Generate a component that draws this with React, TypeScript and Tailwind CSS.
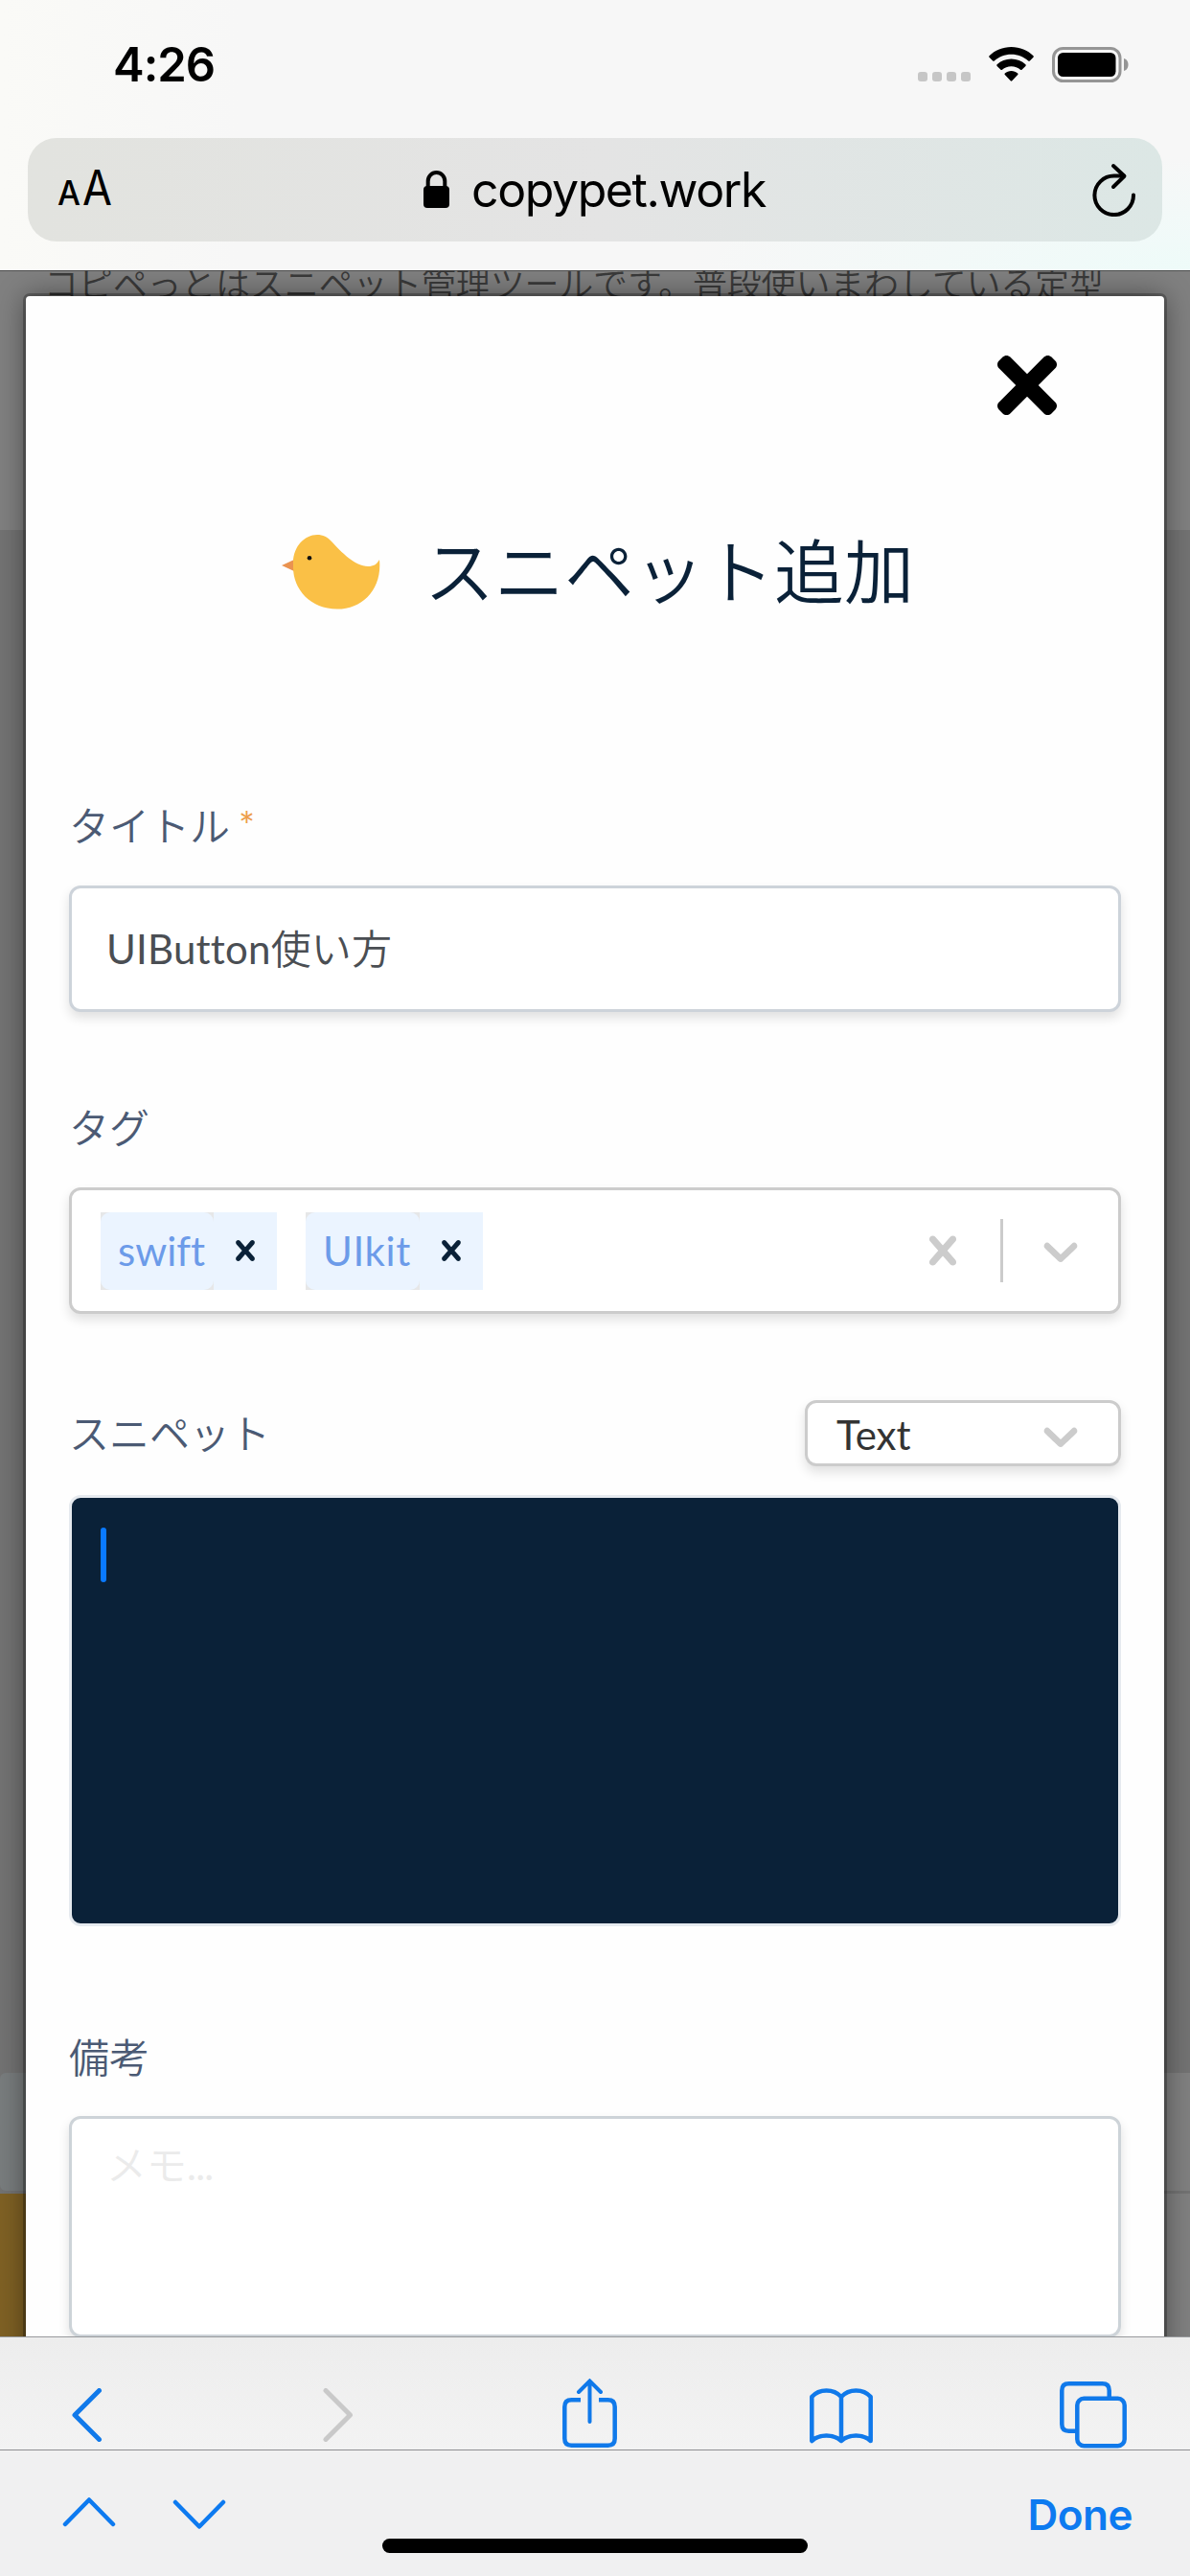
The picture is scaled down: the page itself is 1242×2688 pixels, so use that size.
import React from "react";

const CROSS =
  "M14.348 14.849c-0.469 0.469-1.229 0.469-1.697 0l-2.651-3.030-2.651 3.029c-0.469 0.469-1.229 0.469-1.697 0-0.469-0.469-0.469-1.229 0-1.697l2.758-3.15-2.759-3.152c-0.469-0.469-0.469-1.228 0-1.697s1.228-0.469 1.697 0l2.652 3.031 2.651-3.031c0.469-0.469 1.228-0.469 1.697 0s0.469 1.229 0 1.697l-2.758 3.152 2.758 3.15c0.469 0.469 0.469 1.229 0 1.698z";
const CHEVRON =
  "M4.516 7.548c0.436-0.446 1.043-0.481 1.576 0l3.908 3.747 3.908-3.747c0.533-0.481 1.141-0.446 1.574 0 0.436 0.445 0.408 1.197 0 1.615-0.406 0.418-4.695 4.502-4.695 4.502-0.217 0.223-0.502 0.335-0.787 0.335s-0.57-0.112-0.789-0.335c0 0-4.287-4.084-4.695-4.502s-0.436-1.17 0-1.615z";

const JP = "font-['Lato','Noto_Sans_CJK_JP',sans-serif]";

function Glyph({ d, className }: { d: string; className: string }) {
  return (
    <svg viewBox="0 0 20 20" className={className} fill="currentColor">
      <path d={d} />
    </svg>
  );
}

function StatusBar() {
  return (
    <div className="flex h-[144px] items-start justify-between pt-[38px] pr-[64px] pl-[118px]">
      <span className="font-['Inter',sans-serif] text-[49px] leading-[60px] font-semibold tracking-[-1px] text-black">4:26</span>
      <div className="flex pt-[11px]">
        <div className="mt-[26px] mr-[19px] flex gap-[5px]">
          {[0, 1, 2, 3].map((i) => (
            <i key={i} className="size-[10px] rounded-[3px] bg-[#c6c6c6]" />
          ))}
        </div>
        <svg className="h-[37px] w-[47px]" viewBox="0 0 47 37" fill="black">
          <path d="M23.500 0C32.500 0 40.500 3.500 46.500 9.200Q47.200 10 46.500 10.700L42.800 14.500Q42 15.200 41.200 14.500C36.500 10.200 30.300 7.700 23.500 7.700S10.500 10.200 5.800 14.500Q5 15.200 4.200 14.500L.5 10.700Q-.2 10 .5 9.200C6.500 3.500 14.500 0 23.500 0Z" />
          <path d="M23.500 12.500C29.300 12.500 34.500 14.700 38.400 18.300Q39.200 19.100 38.400 19.900L34.500 23.800Q33.800 24.400 33 23.800C30.500 21.500 27.200 20.200 23.500 20.200S16.500 21.500 14 23.800Q13.200 24.400 12.500 23.800L8.600 19.900Q7.800 19.100 8.600 18.300C12.500 14.700 17.700 12.500 23.500 12.500Z" />
          <path d="M23.500 25C26 25 28.400 25.900 30.200 27.400Q31 28.200 30.200 29L24.300 35.300Q23.500 36 22.700 35.300L16.800 29Q16 28.200 16.800 27.400C18.600 25.900 21 25 23.500 25Z" />
        </svg>
        <svg className="ml-[19px] h-[37px] w-[80px]" viewBox="0 0 80 37">
          <rect x="1.500" y="1.500" width="69.500" height="34" rx="10" fill="none" stroke="#959595" strokeWidth="3" />
          <rect x="6" y="6" width="60.500" height="25" rx="5.500" fill="black" />
          <path d="M75 12C78.500 13 79.500 16 79.500 18.500S78.500 24 75 25Z" fill="#959595" />
        </svg>
      </div>
    </div>
  );
}

function AddressBar() {
  return (
    <div className="mx-[29px] flex h-[108px] items-center justify-between rounded-[30px] bg-linear-to-r from-[#e2e3df] via-[#e4e4e4] to-[#dce7e5] pr-[27px] pl-[31px] font-['Inter',sans-serif] text-black">
      <div className="flex w-[199px] items-baseline">
        <span className="w-[26px] origin-left scale-x-[0.940] text-[36px] leading-[60px] font-medium">A</span>
        <span className="origin-left scale-x-[0.880] text-[51px] leading-[60px]">A</span>
      </div>
      <div className="flex items-center">
        <svg className="h-[40px] w-[27px]" viewBox="0 0 27 40">
          <rect x="0" y="16" width="27" height="23" rx="4" fill="black" />
          <path d="M4.700 18V11a8.800 9 0 0 1 17.600 0V18" fill="none" stroke="black" strokeWidth="4" />
        </svg>
        <span className="ml-[23px] text-[50px] leading-[60px] tracking-[-1.400px]">copypet.work</span>
      </div>
      <div className="flex w-[204px] justify-end">
        <svg className="h-[56px] w-[46px]" viewBox="0 0 46 56" fill="none" stroke="black" strokeWidth="4" strokeLinecap="round" strokeLinejoin="round">
          <path d="M43 33.500A20.300 20.300 0 1 1 23 13.500H33" />
          <path d="M22 3L33.500 13.700L22 25" />
        </svg>
      </div>
    </div>
  );
}

function Backdrop() {
  return (
    <div className="flex h-full flex-col bg-[#737373]">
      <div className="h-[271px] border-t border-[#4d4d4d] bg-[#808080] pl-[46px] font-['Noto_Sans_CJK_JP',sans-serif] text-[36px] leading-[36px] font-[350] tracking-[-0.180px] whitespace-nowrap text-[#3a3a3a]">
        <div className="-mt-[7px]">コピペっとはスニペット管理ツールです。普段使いまわしている定型</div>
      </div>
      <div className="h-[1610px]" />
      <div className="flex h-[123px]">
        <div className="w-[100px] rounded-l-[6px] bg-[#797d7e]" />
        <div className="flex-1 bg-[#808080]" />
      </div>
      <div className="h-[3px] bg-[#737373]" />
      <div className="flex flex-1">
        <div className="w-[100px] bg-[#7f6124]" />
        <div className="flex-1 bg-[#808080]" />
      </div>
    </div>
  );
}

function Label({ children }: { children: React.ReactNode }) {
  return <div className={`${JP} text-[42px] leading-[60px] font-[350] text-[#4b5a74]`}>{children}</div>;
}

function Tag({ name, className }: { name: string; className: string }) {
  return (
    <div className={`flex h-[81px] ${className} bg-[#e6e7e8]`}>
      <div className="flex flex-1 items-center rounded-[10px] bg-[#ebf4ff] pl-[18px] text-[42px] leading-[50px] text-[#6c9be9]">{name}</div>
      <div className="flex w-[66px] items-center justify-center bg-[#ebf4ff] text-[#0a2138]">
        <Glyph d={CROSS} className="size-[42px]" />
      </div>
    </div>
  );
}

const shadow = "shadow-[0_6px_12px_rgba(0,0,0,0.12)]";

function Modal() {
  return (
    <div className={`absolute top-[27px] left-[27px] h-[2200px] w-[1188px] rounded-[4px] bg-[#fefefe] [font-variant-ligatures:none] shadow-[0_0_0_3px_rgba(0,0,0,0.250),0_0_30px_rgba(0,0,0,0.450)] ${JP}`}>
      <div className="flex h-[124px] items-end justify-end pr-[112px]">
        <svg viewBox="0 80 352 352" className="size-[62px]">
          <path d="M242.720 256l100.070-100.070c12.280-12.280 12.280-32.190 0-44.480l-22.240-22.240c-12.280-12.280-32.190-12.280-44.480 0L176 189.280 75.930 89.210c-12.280-12.280-32.190-12.280-44.480 0L9.210 111.450c-12.280 12.280-12.280 32.190 0 44.480L109.280 256 9.210 356.070c-12.280 12.280-12.280 32.190 0 44.480l22.240 22.240c12.280 12.280 32.200 12.280 44.480 0L176 322.720l100.070 100.070c12.280 12.280 32.200 12.280 44.480 0l22.240-22.240c12.280-12.280 12.280-32.190 0-44.480L242.720 256z" />
        </svg>
      </div>
      <div className="mt-[102px] flex h-[120px] items-center pl-[267px]">
        <svg viewBox="0 0 103 78" className="mt-[4px] h-[78px] w-[103px]">
          <path d="M0 32L13 26V38Z" fill="#ea9350" />
          <path d="M12 28C12.500 12 24 0 37 0C43 0 48 2.500 52 7C62 18 77 33 90 33C96 33 99 31 102 26C105 56 85 77.500 58 77.500C30 77.500 12 57 12 34Z" fill="#fac046" />
          <circle cx="29" cy="24.300" r="2.300" fill="#111" />
        </svg>
        <h1 className="-mt-[6px] ml-[46px] font-['Noto_Sans_CJK_JP',sans-serif] text-[73px] leading-[100px] font-[350] whitespace-nowrap text-[#0a2138]">スニペット追加</h1>
      </div>
      <div className="flex flex-col px-[45px] pt-[177px]">
        <div className="flex">
          <Label>タイトル</Label>
          <span className="ml-[9px] text-[40px] leading-[60px] text-[#ed9d4b]">*</span>
        </div>
        <div className={`mt-[32px] flex h-[132px] items-center rounded-[12px] border-[3px] border-[#cdd3da] bg-white pl-[36px] text-[42px] leading-[60px] text-[#4a4e53] ${shadow}`}>
          <span className="tracking-[0.200px]">UIButton<span className="font-[350]">使い方</span></span>
        </div>
        <div className="mt-[91px]">
          <Label>タグ</Label>
        </div>
        <div className={`mt-[32px] flex h-[132px] items-center rounded-[12px] border-[3px] border-[#cccccc] bg-white pl-[30px] text-[#cccccc] ${shadow}`}>
          <Tag name="swift" className="w-[184px]" />
          <div className="w-[30px]" />
          <Tag name="UIkit" className="w-[185px] tracking-[0.600px]" />
          <div className="flex-1" />
          <div className="flex w-[120px] justify-center">
            <Glyph d={CROSS} className="size-[60px]" />
          </div>
          <div className="h-[66px] w-[3px] bg-[#cccccc]" />
          <div className="flex w-[120px] justify-center">
            <Glyph d={CHEVRON} className="size-[60px]" />
          </div>
        </div>
        <div className="mt-[90px] flex h-[69px] items-center justify-between">
          <Label>スニペット</Label>
          <div className={`flex h-[69px] w-[330px] items-center justify-between rounded-[12px] border-[3px] border-[#cccccc] bg-white pr-[30px] pl-[30px] ${shadow}`}>
            <span className="mt-[2px] text-[42px] leading-[50px] text-[#333333]">Text</span>
            <Glyph d={CHEVRON} className="mt-[4px] size-[60px] text-[#cccccc]" />
          </div>
        </div>
        <div className="mt-[30px] h-[450px] rounded-[12px] border-[3px] border-[#e6eaef] bg-[#0a2138] pt-[31px] pl-[30px]">
          <div className="h-[57px] w-[6px] rounded-full bg-[#0a7aff]" />
        </div>
        <div className="mt-[107px]">
          <Label>備考</Label>
        </div>
        <div className={`mt-[31px] h-[231px] rounded-[12px] border-[3px] border-[#cdd3d8] bg-white pt-[18px] pl-[36px] text-[42px] leading-[60px] font-[350] text-[#ebebeb] ${shadow}`}>
          メモ<span className="font-normal tracking-[-0.800px]">...</span>
        </div>
      </div>
    </div>
  );
}

function BottomBars() {
  return (
    <div className="h-[250px] border-t border-[#97999c] bg-[#f0f0f1]">
      <div className="flex h-[118px] items-start border-b-[1px] border-[#8e8e91] bg-linear-to-b from-[#ededed] to-[#f3f3f3] pl-[75px] text-[#1079ea]" >
        <svg className="mt-[53px] h-[56px] w-[32px]" viewBox="0 0 32 56" fill="none" stroke="currentColor" strokeWidth="5" strokeLinecap="round" strokeLinejoin="round">
          <path d="M28.500 2.500L3 28L28.500 53.500" />
        </svg>
        <svg className="mt-[53px] ml-[230px] h-[56px] w-[32px] text-[#c9c9c9]" viewBox="0 0 32 56" fill="none" stroke="currentColor" strokeWidth="5" strokeLinecap="round" strokeLinejoin="round">
          <path d="M3 2.500L28.500 28L3 53.500" />
        </svg>
        <svg className="mt-[43px] ml-[218px] h-[72px] w-[57px]" viewBox="0 0 57 72" fill="none" stroke="currentColor" strokeWidth="4.500">
          <path d="M19 22.300H9.500Q2.300 22.300 2.300 29.500V62.500Q2.300 69.700 9.500 69.700H47.500Q54.700 69.700 54.700 62.500V29.500Q54.700 22.300 47.500 22.300H38" />
          <path d="M28.500 45V3M17 14L28.500 2.500L40 14" strokeLinecap="round" strokeWidth="4" />
        </svg>
        <svg className="mt-[53px] ml-[201px] h-[58px] w-[66px]" viewBox="0 0 66 58" fill="none" stroke="currentColor" strokeWidth="4.500" strokeLinejoin="round" strokeLinecap="round">
          <path d="M2.300 9C10 0.200 25 0.200 33 9C41 0.200 56 0.200 63.700 9V55C56 47.700 41 47.700 33 55C25 47.700 10 47.700 2.300 55ZM33 9V55" />
        </svg>
        <svg className="mt-[46px] ml-[195px] h-[70px] w-[70px]" viewBox="0 0 70 70" fill="none" stroke="currentColor" strokeWidth="4.500">
          <path d="M51.700 16V9.500Q51.700 2.300 44.500 2.300H9.500Q2.300 2.300 2.300 9.500V44.500Q2.300 51.700 9.500 51.700H17" />
          <rect x="18.300" y="17.800" width="49.400" height="49.400" rx="7" />
        </svg>
      </div>
      <div className="flex h-[92px] items-start pl-[65px] text-[#0d7af0]">
        <svg className="mt-[48px] h-[32px] w-[56px]" viewBox="0 0 56 32" fill="none" stroke="currentColor" strokeWidth="4.500" strokeLinecap="round" strokeLinejoin="round">
          <path d="M3 29L28 3.500L53 29" />
        </svg>
        <svg className="mt-[51px] ml-[59px] h-[32px] w-[56px]" viewBox="0 0 56 32" fill="none" stroke="currentColor" strokeWidth="4.500" strokeLinecap="round" strokeLinejoin="round">
          <path d="M3 3L28 28.500L53 3" />
        </svg>
        <span className="mt-[40px] mr-[60px] ml-auto font-['Inter',sans-serif] text-[44px] leading-[54px] font-semibold tracking-[-0.500px]">Done</span>
      </div>
      <div className="mx-auto h-[15px] w-[444px] rounded-full bg-black" />
    </div>
  );
}

export default function App() {
  return (
    <div className="flex h-[2688px] w-[1242px] flex-col overflow-hidden bg-[#f7f7f7]">
      <header className="h-[282px] bg-[radial-gradient(ellipse_at_100%_100%,#eefbf9_0%,rgba(247,247,247,0)_30%),linear-gradient(to_right,#fafaf7,#f7f7f7_20%)]">
        <StatusBar />
        <AddressBar />
      </header>
      <main className="relative h-[2156px] overflow-hidden">
        <Backdrop />
        <Modal />
      </main>
      <BottomBars />
    </div>
  );
}
